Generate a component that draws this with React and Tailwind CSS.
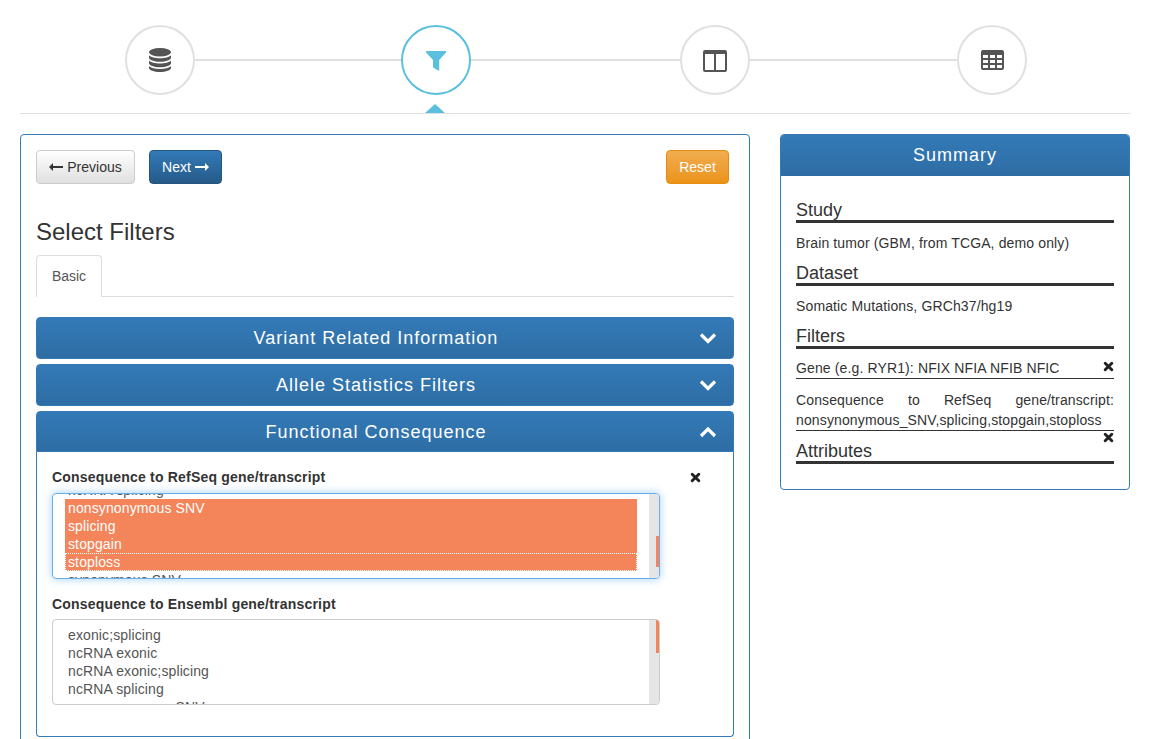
function DatabaseIcon() {
  return (
    <svg viewBox="0 0 22 24" className="h-[24px] w-[22px]" fill="currentColor">
      <ellipse cx="11" cy="4.2" rx="11" ry="4.2" />
      <path d="M0 7.2v2.6c0 2.3 5 4 11 4s11-1.7 11-4V7.2c-1.8 2-6.2 3-11 3s-9.2-1-11-3z" />
      <path d="M0 12.6v2.6c0 2.3 5 4 11 4s11-1.7 11-4v-2.6c-1.8 2-6.2 3-11 3s-9.2-1-11-3z" />
      <path d="M0 18v2c0 2.3 5 4 11 4s11-1.7 11-4v-2c-1.8 2-6.2 3-11 3s-9.2-1-11-3z" />
    </svg>
  );
}

function FilterIcon() {
  return (
    <svg viewBox="0 0 20 20" className="mt-[2px] h-[20px] w-[20px]" fill="currentColor">
      <path d="M0 0H20V1.5L13.2 9V20L7 16.5V9L0 1.5Z" />
    </svg>
  );
}

function ColumnsIcon() {
  return (
    <svg viewBox="0 0 24 22" className="mt-[2px] h-[22px] w-[24px]" fill="currentColor">
      <path fillRule="evenodd" d="M2 0H22a2 2 0 0 1 2 2V20a2 2 0 0 1-2 2H2a2 2 0 0 1-2-2V2a2 2 0 0 1 2-2ZM2 4V20H11V4ZM13 4V20H22V4Z" />
    </svg>
  );
}

function TableIcon() {
  return (
    <svg viewBox="0 0 23 20" className="h-[20px] w-[23px]" fill="currentColor">
      <path fillRule="evenodd" d="M2 0H21a2 2 0 0 1 2 2V18a2 2 0 0 1-2 2H2a2 2 0 0 1-2-2V2a2 2 0 0 1 2-2ZM2 5V8H7V5ZM9 5V8H14V5ZM16 5V8H21V5ZM2 10V13H7V10ZM9 10V13H14V10ZM16 10V13H21V10ZM2 15V18H7V15ZM9 15V18H14V15ZM16 15V18H21V15Z" />
    </svg>
  );
}

function Step({ children, active }) {
  return (
    <div className={`flex h-[70px] w-[70px] shrink-0 items-center justify-center rounded-full border-2 bg-white ${active ? "border-[#5bc0de] text-[#5bc0de]" : "border-[#e0e0e0] text-[#555]"}`}>
      {children}
    </div>
  );
}

function Connector({ width }) {
  return <div className="h-[2px] shrink-0 bg-[#e0e0e0]" style={{ width }} />;
}

function LongArrow({ left }) {
  return (
    <svg viewBox="0 0 14 8" className="h-[8px] w-[14px]" fill="currentColor">
      <path d={left ? "M4 0V3H14V5H4V8L0 4Z" : "M10 0V3H0V5H10V8L14 4Z"} />
    </svg>
  );
}

function RemoveIcon({ className = "" }) {
  return (
    <svg viewBox="0 0 12 12" className={`h-[11px] w-[11px] ${className}`}>
      <path d="M2.4 2.4 9.6 9.6M9.6 2.4 2.4 9.6" stroke="#222" strokeWidth="3.2" strokeLinecap="round" />
    </svg>
  );
}

function Chevron({ up }) {
  return (
    <svg viewBox="0 0 18 12" className="absolute right-[16px] top-1/2 h-[12px] w-[18px] -translate-y-1/2">
      <path d={up ? "M2 10 9 3l7 7" : "M2 2.5 9 9.5l7-7"} fill="none" stroke="#fff" strokeWidth="3.2" />
    </svg>
  );
}

function AccordionHeader({ title, open }) {
  return (
    <div className={`relative flex items-center justify-center border border-[#337ab7] bg-linear-to-b from-[#337ab7] to-[#2e6da4] pr-[18px] text-[18px] tracking-[1px] text-white ${open ? "h-[41px] rounded-t" : "h-[42px] rounded"}`}>
      {title}
      <Chevron up={open} />
    </div>
  );
}

function ListBox({ focused, rows, offset, thumbTop, thumbHeight }) {
  return (
    <div className={`flex h-[86px] w-[608px] overflow-hidden rounded border ${focused ? "border-[#66afe9] shadow-[0_0_8px_rgba(102,175,233,0.6)]" : "border-[#ccc]"}`}>
      <div className="min-w-0 flex-1 overflow-hidden px-[12px] tracking-[0.12px] text-[#555]">
        <div style={{ marginTop: offset }}>
          {rows.map((r) => (
            <div key={r.label} className={`h-[18px] pl-[3px] leading-[18px] ${r.selected ? "bg-[#f4845a] text-white" : ""} ${r.current ? "outline-1 -outline-offset-1 outline-dotted outline-white" : ""}`}>
              {r.label}
            </div>
          ))}
        </div>
      </div>
      <div className="flex w-[10px] shrink-0 justify-end bg-[#e5e5e5]">
        <div className="w-[3px] bg-[#f4845a]" style={{ marginTop: thumbTop, height: thumbHeight }} />
      </div>
    </div>
  );
}

function SummaryHeading({ children }) {
  return <div className="h-[23px] border-b-[3px] border-[#333] text-[18px] leading-[20px] tracking-normal text-[#333]">{children}</div>;
}

const refseqRows = [
  { label: "ncRNA splicing" },
  { label: "nonsynonymous SNV", selected: true },
  { label: "splicing", selected: true },
  { label: "stopgain", selected: true },
  { label: "stoploss", selected: true, current: true },
  { label: "synonymous SNV" },
];

const ensemblRows = [
  { label: "exonic;splicing" },
  { label: "ncRNA exonic" },
  { label: "ncRNA exonic;splicing" },
  { label: "ncRNA splicing" },
  { label: "nonsynonymous SNV" },
];

export default function App() {
  return (
    <div className="h-[739px] overflow-hidden bg-white pl-[20px] pr-[19px] font-['Liberation_Sans',Arial,sans-serif] text-[14px] leading-[20px] text-[#333]">
      <div className="relative flex h-[114px] items-start border-b border-[#e0e0e0] pl-[105px] pt-[25px]">
        <Step><DatabaseIcon /></Step>
        <div className="flex h-[70px] items-center"><Connector width={206} /></div>
        <Step active><FilterIcon /></Step>
        <div className="flex h-[70px] items-center"><Connector width={209} /></div>
        <Step><ColumnsIcon /></Step>
        <div className="flex h-[70px] items-center"><Connector width={207} /></div>
        <Step><TableIcon /></Step>
        <div className="absolute bottom-0 left-[405px] h-0 w-0 border-x-[10px] border-b-[9px] border-x-transparent border-b-[#5bc0de]" />
      </div>

      <div className="mt-[20px] flex items-start gap-[30px]">
        <div className="h-[640px] w-[730px] shrink-0 rounded border border-[#337ab7] px-[15px] pt-[15px]">
          <div className="flex h-[34px] items-stretch">
            <button className="flex w-[99px] items-center justify-center gap-[4px] rounded border border-[#ccc] bg-linear-to-b from-[#fff] to-[#e0e0e0] text-[#333]">
              <LongArrow left /> Previous
            </button>
            <button className="ml-[14px] flex w-[73px] items-center justify-center gap-[4px] rounded border border-[#245580] bg-linear-to-b from-[#337ab7] to-[#265a88] text-white">
              Next <LongArrow />
            </button>
            <button className="ml-auto mr-[5px] w-[63px] rounded border border-[#e38d13] bg-linear-to-b from-[#f0ad4e] to-[#eb9316] text-white">
              Reset
            </button>
          </div>

          <h2 className="mt-[34px] h-[27px] text-[24px] leading-[27px] text-[#333]">Select Filters</h2>

          <div className="mt-[10px] flex h-[42px] border-b border-[#ddd]">
            <div className="-mb-px flex h-[42px] w-[66px] items-center justify-center rounded-t border border-b-0 border-[#ddd] bg-white pb-[2px] text-[#555]">
              Basic
            </div>
          </div>

          <div className="mt-[20px] flex flex-col gap-[5px]">
            <AccordionHeader title="Variant Related Information" />
            <AccordionHeader title="Allele Statistics Filters" />
            <div>
              <AccordionHeader title="Functional Consequence" open />
              <div className="h-[285px] rounded-b border border-t-0 border-[#337ab7] px-[15px] pt-[15px]">
                <div className="flex h-[20px] items-center justify-between pr-[17px] font-bold tracking-[0.2px]">
                  <span>Consequence to RefSeq gene/transcript</span>
                  <RemoveIcon />
                </div>
                <div className="mt-[6px]">
                  <ListBox focused rows={refseqRows} offset={-13} thumbTop={42} thumbHeight={31} />
                </div>
                <div className="mt-[15px] h-[20px] font-bold tracking-[0.2px]">Consequence to Ensembl gene/transcript</div>
                <div className="mt-[5px]">
                  <ListBox rows={ensemblRows} offset={6} thumbTop={0} thumbHeight={33} />
                </div>
              </div>
            </div>
          </div>
        </div>

        <div className="w-[350px] shrink-0 overflow-hidden rounded border border-[#337ab7]">
          <div className="flex h-[41px] items-center justify-center bg-linear-to-b from-[#337ab7] to-[#2e6da4] pb-[2px] text-[18px] tracking-[1px] text-white">
            Summary
          </div>
          <div className="px-[15px] pb-[25px] pt-[24px] tracking-[0.13px]">
            <SummaryHeading>Study</SummaryHeading>
            <p className="mt-[10px]">Brain tumor (GBM, from TCGA, demo only)</p>
            <div className="mt-[10px]"><SummaryHeading>Dataset</SummaryHeading></div>
            <p className="mt-[10px]">Somatic Mutations, GRCh37/hg19</p>
            <div className="mt-[10px]"><SummaryHeading>Filters</SummaryHeading></div>
            <div className="mt-[9px] flex h-[21px] justify-between border-b border-[#333]">
              <span>Gene (e.g. RYR1): NFIX NFIA NFIB NFIC</span>
              <RemoveIcon className="mt-[3px]" />
            </div>
            <div className="relative mt-[11px] border-b border-[#333] text-justify">
              Consequence to RefSeq gene/transcript: nonsynonymous_SNV,splicing,stopgain,stoploss
              <RemoveIcon className="absolute right-0 top-[42px]" />
            </div>
            <div className="mt-[10px]"><SummaryHeading>Attributes</SummaryHeading></div>
          </div>
        </div>
      </div>
    </div>
  );
}
